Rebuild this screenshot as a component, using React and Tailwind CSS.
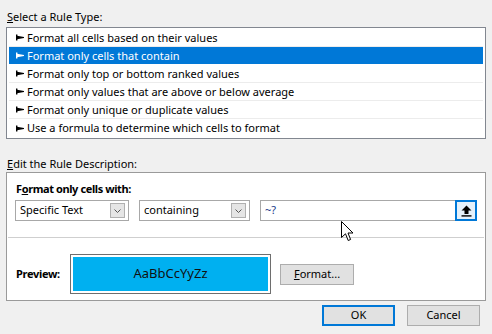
import React from "react";

const RULES = [
  "Format all cells based on their values",
  "Format only cells that contain",
  "Format only top or bottom ranked values",
  "Format only values that are above or below average",
  "Format only unique or duplicate values",
  "Use a formula to determine which cells to format",
];

const Marker = ({ color }) => (
  <svg width="8" height="7" viewBox="0 0 8 7" className="shrink-0">
    <rect x="0" y="0.5" width="1.4" height="6" fill={color} />
    <polygon points="1,1.8 8,3.1 8,3.9 1,5.2" fill={color} />
  </svg>
);

const Chevron = () => (
  <svg width="9" height="6" viewBox="0 0 9 6">
    <path d="M1.5 1.5 L4.5 4.5 L7.5 1.5" fill="none" stroke="#555" strokeWidth="1" />
  </svg>
);

const Select = ({ label, width }) => (
  <div
    className={`${width} h-[21px] bg-white border border-[#a8a8a8] flex items-center justify-between pl-[4px] pr-[3px]`}
  >
    <span>{label}</span>
    <div className="w-[15px] h-[15px] bg-[#e5e5e5] border border-[#b0b0b0] flex items-center justify-center">
      <Chevron />
    </div>
  </div>
);

const Button = ({ children, primary, className = "" }) => (
  <button
    className={`h-[21px] bg-[#e1e1e1] flex items-center justify-center ${
      primary ? "border-2 border-[#0078d7]" : "border border-[#adadad]"
    } ${className}`}
  >
    {children}
  </button>
);

export default function App() {
  return (
    <div
      className="relative w-[492px] h-[334px] bg-[#f0f0f0] text-[11px] text-black overflow-hidden"
      style={{ fontFamily: '"Noto Sans", "Open Sans", sans-serif' }}
    >
      <div className="pl-[7px] pt-[9px] leading-[16px]">
        <u>S</u>elect a Rule Type:
      </div>

      <div className="ml-[6px] mt-[2px] w-[480px] border border-[#828790] bg-white px-[2px] py-[1px]">
        {RULES.map((r, i) => {
          const sel = i === 1;
          return (
            <div
              key={r}
              className={`h-[18px] flex items-center gap-[3px] pl-[7px] border-b ${
                sel ? "bg-[#0078d7] text-white border-white" : "border-[#ececec]"
              } ${i === RULES.length - 1 ? "border-b-0" : ""}`}
            >
              <Marker color={sel ? "#ffffff" : "#000000"} />
              <span className="whitespace-nowrap leading-[16px]">{r}</span>
            </div>
          );
        })}
      </div>

      <div className="pl-[7px] mt-[17px] leading-[16px]">
        <u>E</u>dit the Rule Description:
      </div>

      <div className="ml-[6px] w-[480px] h-[129px] border border-[#9a9a9a] bg-white flex flex-col">
        <div className="pl-[9px] pt-[8px] leading-[16px] font-bold tracking-[-0.4px]">
          F<u>o</u>rmat only cells with:
        </div>
        <div className="flex items-center gap-[10px] pl-[8px] mt-[3px]">
          <Select label="Specific Text" width="w-[114px]" />
          <Select label="containing" width="w-[111px]" />
          <div className="w-[217px] h-[21px] bg-white border border-[#a8a8a8] flex items-center justify-between pl-[4px]">
            <span className="text-[#1a3a8a]">~?</span>
            <div className="w-[22px] h-[21px] -mr-[1px] border-2 border-[#0078d7] bg-[#e5f1fb] flex items-center justify-center">
              <svg width="11" height="12" viewBox="0 0 11 12">
                <polygon points="5.5,0.5 10.5,5.5 7.5,5.5 7.5,9 3.5,9 3.5,5.5 0.5,5.5" fill="#000" />
                <rect x="0.5" y="10.2" width="10" height="1.4" fill="#000" />
              </svg>
            </div>
          </div>
        </div>
        <div className="mt-[16px] mx-[1px] border-t border-[#cfcfcf]" />
        <div className="flex items-center mt-[16px] pl-[9px]">
          <span className="font-bold w-[54px] tracking-[-0.3px]">Preview:</span>
          <div className="w-[201px] h-[40px] border border-[#6e6e6e] p-[2px] bg-white">
            <div className="w-full h-full bg-[#00b0f0] flex items-center justify-center text-[13px] text-[#111]">
              AaBbCcYyZz
            </div>
          </div>
          <Button className="ml-[9px] w-[74px]">
            <span>
              <u>F</u>ormat...
            </span>
          </Button>
        </div>
      </div>

      <div className="flex justify-end gap-[12px] pr-[12px] mt-[4px]">
        <Button primary className="w-[73px]">
          OK
        </Button>
        <Button className="w-[73px]">Cancel</Button>
      </div>

      <svg
        className="absolute left-[341px] top-[221px]"
        width="13"
        height="21"
        viewBox="0 0 13 21"
      >
        <path
          d="M0.5 0.5 L0.5 16.5 L4.5 12.8 L7.2 19.5 L9.6 18.5 L7 12 L12 12 Z"
          fill="#fff"
          stroke="#000"
          strokeWidth="1"
          strokeLinejoin="miter"
        />
      </svg>
    </div>
  );
}
